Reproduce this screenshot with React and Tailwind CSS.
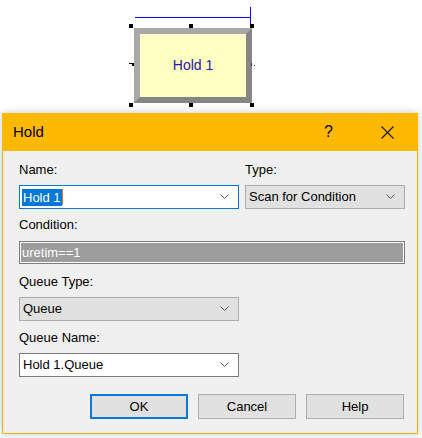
import React from 'react';

const font = { fontFamily: '"Liberation Sans", Arial, sans-serif' };

const Chevron = () => (
    <svg width="9" height="6" viewBox="0 0 9 6" className="shrink-0">
        <polyline points="0.5,0.5 4.5,4.5 8.5,0.5" fill="none" stroke="#5a5a5a" strokeWidth="1" />
    </svg>
);

const Combo = ({ value, className, children }) => (
    <div className={`flex items-center h-[24px] pl-[2px] pr-[9px] ${className}`}>
        <div className="flex-1 flex items-center">{children || <span className="pl-[1px]">{value}</span>}</div>
        <Chevron />
    </div>
);

const Handle = ({ x, y }) => (
    <div className="absolute w-[4px] h-[4px] bg-black" style={{ left: x, top: y }} />
);

const Button = ({ label, focused }) => (
    <button
        className={`w-[98px] h-[25px] bg-[#e1e1e1] text-[13px] text-black ${focused ? 'border-2 border-[#0078d7]' : 'border border-[#adadad]'}`}
    >
        {label}
    </button>
);

export default function App() {
    return (
        <div className="w-[422px] h-[438px] bg-white overflow-hidden text-black" style={font}>
            {/* model canvas */}
            <div className="relative h-[113px]">
                <div className="absolute left-[135px] top-[17px] w-[116px] h-[1px] bg-[#0000ff]" />
                <div className="absolute left-[250px] top-[7px] w-[1px] h-[18px] bg-[#0000ff]" />
                <div className="absolute left-[134px] top-[28px] w-[118px] h-[75px] border-[6px] border-t-[#a8a8a8] border-l-[#a8a8a8] border-r-[#858585] border-b-[#858585] bg-[#ffffc4] flex items-center justify-center">
                    <span className="text-[14px] text-[#2618a0]">Hold 1</span>
                </div>
                <Handle x={129} y={24} />
                <Handle x={189} y={24} />
                <Handle x={250} y={24} />
                <Handle x={129} y={103} />
                <Handle x={189} y={103} />
                <Handle x={250} y={103} />
                <div className="absolute left-[129px] top-[63px] w-[5px] h-[1px] bg-black" />
                <div className="absolute left-[132px] top-[63px] w-[2px] h-[3px] bg-black" />
                <div className="absolute left-[251px] top-[63px] w-[1px] h-[3px] bg-[#333]" />
                <div className="absolute left-[254px] top-[65px] w-[1px] h-[1px] bg-[#333]" />
            </div>

            {/* dialog */}
            <div className="ml-[2px] w-[416px] h-[321px] flex flex-col border border-t-0 border-[#f2b600] bg-[#f0f0f0] shadow-[0_0_8px_rgba(0,0,0,0.22)]">
                <div className="h-[38px] -mx-[1px] bg-[#ffb900] flex items-center pl-[11px] pr-[24px]">
                    <span className="text-[15px] flex-1">Hold</span>
                    <span className="text-[16px] mr-[48px]">?</span>
                    <svg width="13" height="13" viewBox="0 0 13 13">
                        <path d="M0.5 0.5 L12.5 12.5 M12.5 0.5 L0.5 12.5" stroke="#111" strokeWidth="1.1" fill="none" />
                    </svg>
                </div>

                <div className="flex flex-col pl-[16px] pr-[12px] text-[13px] leading-[16px]">
                    <div className="flex gap-[6px] mt-[11px]">
                        <div className="w-[220px] flex flex-col gap-[7px]">
                            <div>Name:</div>
                            <Combo className="bg-white border border-[#0078d7]">
                                <span className="bg-[#0078d7] text-white pl-[1px] pr-[1px] h-[17px] leading-[17px]">Hold 1</span>
                                <span className="w-[1px] h-[16px] bg-[#e07a30]" />
                            </Combo>
                        </div>
                        <div className="w-[160px] flex flex-col gap-[7px]">
                            <div>Type:</div>
                            <Combo value="Scan for Condition" className="bg-[#e1e1e1] border border-[#adadad]" />
                        </div>
                    </div>

                    <div className="mt-[8px]">Condition:</div>
                    <div className="mt-[8px] w-[386px] h-[23px] border border-[#7a7a7a] p-[1px] bg-white">
                        <div className="h-full bg-[#9d9d9d] text-white flex items-center pl-[1px]">uretim==1</div>
                    </div>

                    <div className="mt-[10px]">Queue Type:</div>
                    <Combo value="Queue" className="mt-[7px] w-[220px] bg-[#e1e1e1] border border-[#adadad]" />

                    <div className="mt-[9px]">Queue Name:</div>
                    <Combo value="Hold 1.Queue" className="mt-[7px] w-[220px] bg-white border border-[#7a7a7a]" />

                    <div className="mt-[17px] flex justify-end gap-[10px] pr-[1px]">
                        <Button label="OK" focused />
                        <Button label="Cancel" />
                        <Button label="Help" />
                    </div>
                </div>
            </div>
        </div>
    );
}
